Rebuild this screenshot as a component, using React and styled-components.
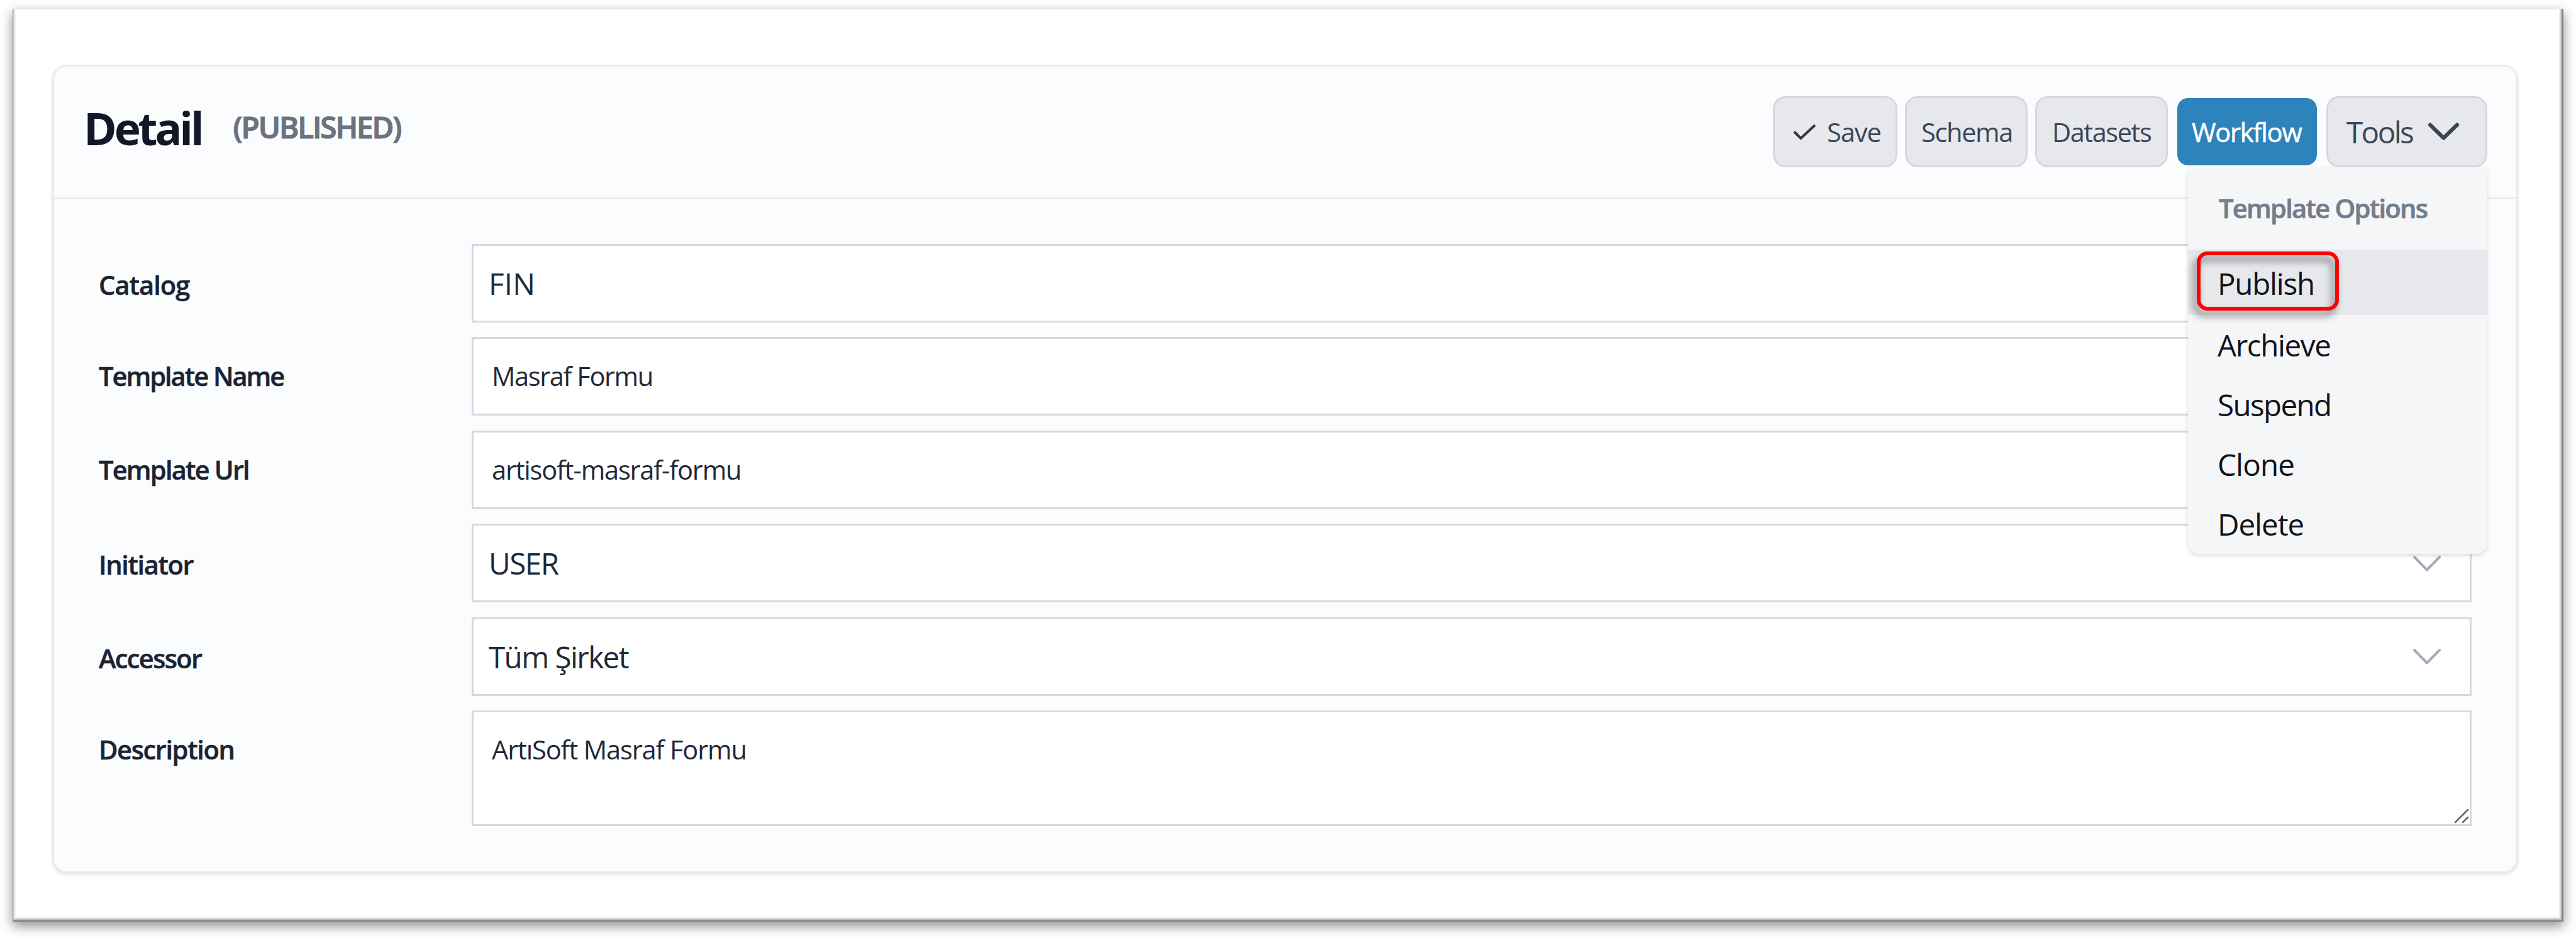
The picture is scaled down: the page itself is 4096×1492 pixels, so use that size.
import React from "react";
import styled, { createGlobalStyle, css } from "styled-components";

const GlobalStyle = createGlobalStyle`
  html, body { margin: 0; padding: 0; background: #ffffff; }
  body { overflow: hidden; font-family: "Open Sans", "Noto Sans", sans-serif; }
  *, *::before, *::after { box-sizing: border-box; }
`;

const Page = styled.main`
  width: 4096px;
  height: 1492px;
  padding: 14px 20px 26px;
  background: #ffffff;
  overflow: hidden;
`;

const Frame = styled.div`
  width: 4056px;
  height: 1452px;
  padding: 89px 72px 0 63px;
  background: #ffffff;
  box-shadow:
    inset 1px 0 0 #a4a4a4,
    inset -2px -2px 0 #828282,
    inset 2px 0 0 #c2c2c2,
    inset -3px -3px 0 #a6a6a6,
    inset 0 1px 0 #e6e6e6,
    inset 3px 0 0 #dedede,
    inset -4px -4px 0 #bcbcbc,
    inset -5px -5px 0 #d0d0d0,
    inset 5px 0 0 #f2f2f2,
    inset -6px -6px 0 #e2e2e2,
    inset -7px -8px 0 #f1f1f1,
    0 7px 18px rgba(0, 0, 0, 0.45);
`;

const Card = styled.section`
  width: 3921px;
  height: 1286px;
  display: flex;
  flex-direction: column;
  background: #fbfcfe;
  border: 3px solid #e8eaed;
  border-radius: 23px;
  box-shadow: 0 3px 6px -1px rgba(0, 0, 0, 0.13);
`;

const Header = styled.header`
  height: 211px;
  flex: none;
  display: flex;
  justify-content: space-between;
  align-items: flex-start;
  padding: 47px 46px 0 47px;
  border-bottom: 3px solid #e9eaed;
`;

const Heading = styled.div`
  display: flex;
  gap: 50px;
`;

const Title = styled.h1`
  margin: 0;
  font-size: 71.4px;
  font-weight: 700;
  line-height: 102px;
  letter-spacing: -4.2px;
  color: #111827;
`;

const Status = styled.span`
  font-size: 47.6px;
  font-weight: 600;
  line-height: 97px;
  letter-spacing: -2.1px;
  color: #6b7280;
  -webkit-text-stroke: 1.2px #6b7280;
`;

const Actions = styled.div`
  position: relative;
  display: flex;
  gap: 12px;
`;

const Button = styled.button`
  width: ${(p) => p.$width}px;
  height: 113px;
  display: flex;
  align-items: center;
  padding: 0 0 0 ${(p) => p.$pad}px;
  border: 3px solid #d5d8df;
  border-radius: 20px;
  background: #e7e8ec;
  color: #3b4658;
  font-family: inherit;
  font-size: ${(p) => (p.$large ? 47.6 : 41.7)}px;
  line-height: 105px;
  letter-spacing: ${(p) => p.$track}px;
  white-space: nowrap;
  ${(p) =>
    p.$primary &&
    css`
      background: #2d84bd;
      background-clip: padding-box;
      border-color: transparent;
      color: #ffffff;
      -webkit-text-stroke: 0.6px #ffffff;
    `}
`;

const ButtonText = styled.span`
  margin-left: ${(p) => p.$gap || 0}px;
`;

const Glyph = styled.svg`
  flex: none;
  display: block;
  overflow: visible;
  fill: none;
  margin-left: ${(p) => p.$gap || 0}px;
`;

const Menu = styled.div`
  position: absolute;
  top: 113px;
  right: 0;
  z-index: 2;
  width: 476px;
  height: 615px;
  background: #f5f6f8;
  border-radius: 6px 6px 18px 18px;
  box-shadow: 0 3px 6px rgba(0, 0, 0, 0.14);
`;

const MenuTitle = styled.div`
  height: 131px;
  padding-left: 49px;
  font-size: 41.7px;
  font-weight: 600;
  line-height: 130px;
  letter-spacing: -1.77px;
  color: #747d8b;
  -webkit-text-stroke: 0.7px #747d8b;
`;

const MenuItem = styled.div`
  position: relative;
  height: ${(p) => (p.$active ? 104 : 95)}px;
  padding-left: 47px;
  background: ${(p) => (p.$active ? "#e7e8ec" : "transparent")};
  font-size: 47.6px;
  line-height: ${(p) => (p.$active ? 107 : 96)}px;
  letter-spacing: ${(p) => p.$track}px;
  color: #10131a;
`;

const Highlight = styled.span`
  position: absolute;
  left: 14px;
  top: 3px;
  width: 226px;
  height: 94px;
  border: 6px solid #ff0000;
  border-radius: 17px;
  filter: drop-shadow(-5px 9px 6px rgba(0, 0, 0, 0.5));
`;

const Form = styled.form`
  display: flex;
  flex-direction: column;
  gap: 23.6px;
  padding: 70.5px 71px 0 71px;
`;

const Row = styled.div`
  display: grid;
  grid-template-columns: 593px 3180px;
`;

const Label = styled.label`
  font-size: 41.7px;
  font-weight: 600;
  line-height: ${(p) => (p.$select ? 130 : 124)}px;
  height: 125px;
  letter-spacing: ${(p) => p.$track}px;
  color: #1b2433;
  -webkit-text-stroke: 0.5px #1b2433;
`;

const Field = styled.div`
  position: relative;
  height: ${(p) => (p.$tall ? 184 : 125)}px;
  display: flex;
  justify-content: space-between;
  align-items: flex-start;
  padding: 0 46px 0 ${(p) => (p.$select ? 24 : 29)}px;
  border: 3px solid #d5d8df;
  background: #ffffff;
  color: #1f2937;
  font-size: ${(p) => (p.$select ? 47.6 : 41.7)}px;
  line-height: ${(p) => (p.$select ? 120 : 118)}px;
  letter-spacing: ${(p) => p.$track}px;
`;

const ChevronSlot = styled.span`
  height: 120px;
  display: flex;
  align-items: center;
`;

const Grip = styled(Glyph)`
  position: absolute;
  right: 2px;
  bottom: 2px;
`;

const FIELDS = [
  { label: "Catalog", lt: -1.02, value: "FIN", vt: 0.2, kind: "select" },
  { label: "Template Name", lt: -2.06, value: "Masraf Formu", vt: -1.46 },
  { label: "Template Url", lt: -1.85, value: "artisoft-masraf-formu", vt: -1.24 },
  { label: "Initiator", lt: -1.45, value: "USER", vt: -1.51, kind: "select" },
  { label: "Accessor", lt: -1.7, value: "Tüm Şirket", vt: -1.6, kind: "select" },
  { label: "Description", lt: -1.43, value: "ArtıSoft Masraf Formu", vt: -1.19, kind: "area" },
];

const OPTIONS = [
  { text: "Publish", track: -1.29, active: true },
  { text: "Archieve", track: -1.4 },
  { text: "Suspend", track: -1.65 },
  { text: "Clone", track: -0.9 },
  { text: "Delete", track: -1.07 },
];

function FormRow({ label, lt, value, vt, kind }) {
  const select = kind === "select";
  const area = kind === "area";
  return (
    <Row>
      <Label $select={select} $track={lt}>{label}</Label>
      <Field $select={select} $tall={area} $track={vt}>
        <span>{value}</span>
        {select && (
          <ChevronSlot>
            <Glyph width="44" height="25" viewBox="0 0 44 25">
              <path d="M2 2 L22 22.5 L42 2" stroke="#a3abb8" strokeWidth="4" strokeLinecap="round" strokeLinejoin="round" />
            </Glyph>
          </ChevronSlot>
        )}
        {area && (
          <Grip width="22" height="22" viewBox="0 0 22 22">
            <path d="M1 21 L21 1 M13 21 L21 13" stroke="#666666" strokeWidth="2.6" strokeLinecap="round" />
          </Grip>
        )}
      </Field>
    </Row>
  );
}

export default function App() {
  return (
    <>
      <GlobalStyle />
      <Page>
        <Frame>
          <Card>
            <Header>
              <Heading>
                <Title>Detail</Title>
                <Status>(PUBLISHED)</Status>
              </Heading>
              <Actions>
                <Button $width={198} $pad={29} $track={-1.15}>
                  <Glyph width="37" height="26" viewBox="0 0 37 26">
                    <path d="M1.8 12.5 L12.4 23 L35 2" stroke="#33363b" strokeWidth="4" />
                  </Glyph>
                  <ButtonText $gap={17}>Save</ButtonText>
                </Button>
                <Button $width={195} $pad={23} $track={-1.42}>
                  <ButtonText>Schema</ButtonText>
                </Button>
                <Button $width={211} $pad={24} $track={-1.52}>
                  <ButtonText>Datasets</ButtonText>
                </Button>
                <Button $width={228} $pad={23} $track={-1.25} $primary>
                  <ButtonText>Workflow</ButtonText>
                </Button>
                <Button $width={256} $pad={29} $track={-2.6} $large>
                  <ButtonText>Tools</ButtonText>
                  <Glyph $gap={25} width="49" height="27" viewBox="0 0 49 27">
                    <path d="M3 2.5 L24.5 23.5 L46 2.5" stroke="#3a4658" strokeWidth="6" strokeLinecap="round" strokeLinejoin="round" />
                  </Glyph>
                </Button>
                <Menu>
                  <MenuTitle>Template Options</MenuTitle>
                  {OPTIONS.map((o) => (
                    <MenuItem key={o.text} $active={o.active} $track={o.track}>
                      {o.active && <Highlight />}
                      {o.text}
                    </MenuItem>
                  ))}
                </Menu>
              </Actions>
            </Header>
            <Form>
              {FIELDS.map((f) => (
                <FormRow key={f.label} {...f} />
              ))}
            </Form>
          </Card>
        </Frame>
      </Page>
    </>
  );
}
